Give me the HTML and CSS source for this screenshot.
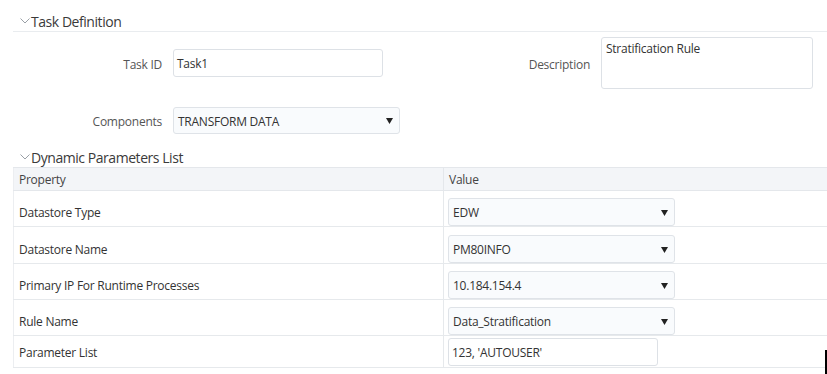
FILE: index.html
```html
<!DOCTYPE html>
<html lang="en">
<head>
    <meta charset="UTF-8">
    <title>Task Definition</title>
    <link rel="stylesheet" href="styles.css">
</head>
<body>
    <div class="page">
        <div class="section-head">
            <svg class="chev" width="10" height="6" viewBox="0 0 10 6"><path d="M0.5 0.5 L5 5 L9.5 0.5" fill="none" stroke="#9aa0a6" stroke-width="1"/></svg>
            <span>Task Definition</span>
        </div>

        <div class="task-form">
            <label class="lbl">Task ID</label>
            <div class="input">Task1</div>
            <label class="lbl">Description</label>
            <div class="textarea">Stratification Rule</div>

            <label class="lbl comp-lbl">Components</label>
            <div class="select comp-select">
                <span>TRANSFORM DATA</span>
                <svg class="arrow" width="7" height="6" viewBox="0 0 7 6"><path d="M0 0 H7 L3.5 6 Z" fill="#222"/></svg>
            </div>
        </div>

        <div class="section-head dyn">
            <svg class="chev" width="10" height="6" viewBox="0 0 10 6"><path d="M0.5 0.5 L5 5 L9.5 0.5" fill="none" stroke="#9aa0a6" stroke-width="1"/></svg>
            <span>Dynamic Parameters List</span>
        </div>

        <table class="params">
            <thead>
                <tr><th class="col-prop">Property</th><th>Value</th></tr>
            </thead>
            <tbody>
                <tr>
                    <td>Datastore Type</td>
                    <td><div class="select"><span>EDW</span><svg class="arrow" width="7" height="6" viewBox="0 0 7 6"><path d="M0 0 H7 L3.5 6 Z" fill="#222"/></svg></div></td>
                </tr>
                <tr class="tall">
                    <td>Datastore Name</td>
                    <td><div class="select"><span>PM80INFO</span><svg class="arrow" width="7" height="6" viewBox="0 0 7 6"><path d="M0 0 H7 L3.5 6 Z" fill="#222"/></svg></div></td>
                </tr>
                <tr>
                    <td>Primary IP For Runtime Processes</td>
                    <td><div class="select"><span>10.184.154.4</span><svg class="arrow" width="7" height="6" viewBox="0 0 7 6"><path d="M0 0 H7 L3.5 6 Z" fill="#222"/></svg></div></td>
                </tr>
                <tr>
                    <td>Rule Name</td>
                    <td><div class="select"><span>Data_Stratification</span><svg class="arrow" width="7" height="6" viewBox="0 0 7 6"><path d="M0 0 H7 L3.5 6 Z" fill="#222"/></svg></div></td>
                </tr>
                <tr class="last">
                    <td>Parameter List</td>
                    <td><div class="input param-input">123, 'AUTOUSER'</div></td>
                </tr>
            </tbody>
        </table>
    </div>
    <div class="cursor-bar"></div>
</body>
</html>
```

FILE: styles.css
```css
body {
    margin: 0;
    background: #fff;
    font-family: "Open Sans", "Noto Sans", Arial, sans-serif;
    font-size: 12px;
    letter-spacing: -0.25px;
    color: #333;
}
.page {
    padding-left: 13px;
}
.section-head {
    display: flex;
    align-items: center;
    height: 20px;
    padding-top: 11px;
    border-bottom: 1px solid #e9ecef;
    font-size: 14px;
    letter-spacing: -0.45px;
    color: #3a3a3a;
}
.section-head .chev {
    margin: 0 1px 0 7px;
}
.section-head.dyn {
    padding-top: 13px;
    border-bottom: none;
}
.task-form {
    display: grid;
    grid-template-columns: 149px 210px 196px 212px;
    column-gap: 11px;
    row-gap: 18px;
    margin-top: 5px;
    align-items: center;
}
.lbl {
    text-align: right;
    color: #555;
    padding-top: 2px;
}
.input {
    box-sizing: border-box;
    height: 28px;
    line-height: 27px;
    padding: 0 3px;
    border: 1px solid #dde1e6;
    border-radius: 3px;
    background: #fff;
    color: #333;
}
.textarea {
    box-sizing: border-box;
    height: 52px;
    padding: 2px 4px;
    border: 1px solid #dde1e6;
    border-radius: 3px;
    background: #fff;
}
.select {
    box-sizing: border-box;
    display: flex;
    align-items: center;
    justify-content: space-between;
    height: 28px;
    padding: 1px 6px 0 4px;
    border: 1px solid #dfe3e8;
    border-radius: 3px;
    background: #f9fbfd;
    color: #333;
}
.comp-select {
    width: 227px;
    height: 27px;
}
.params {
    width: 814px;
    border-collapse: collapse;
    margin-top: 0;
}
.params th {
    height: 22px;
    padding: 0 5px;
    text-align: left;
    font-weight: normal;
    color: #444;
    background: #f3f5f8;
    border-top: 1px solid #e4e7eb;
    border-bottom: 1px solid #e4e7eb;
}
.params th.col-prop {
    width: 419px;
    border-left: 1px solid #eceef1;
    border-right: 1px solid #e4e7eb;
}
.params td {
    height: 28px;
    padding: 7px 4px 0;
    border-bottom: 1px solid #e6e9ec;
    color: #333;
}
.params td:first-child {
    padding-left: 5px;
    border-left: 1px solid #eceef1;
    border-right: 1px solid #e6e9ec;
}
.params td .select {
    width: 227px;
}
.params tr.tall td {
    padding-top: 8px;
}
.params tr.last td {
    height: 28px;
    padding: 2px 4px 1px;
}
.params tr.last td:first-child {
    padding-left: 5px;
}
.param-input {
    width: 210px;
}
.cursor-bar {
    position: absolute;
    left: 825px;
    top: 350px;
    width: 2px;
    height: 24px;
    background: #000;
}
```
